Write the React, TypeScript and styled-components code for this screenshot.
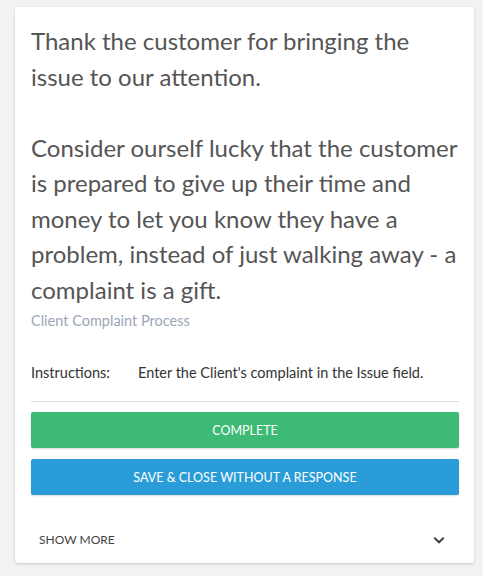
import React from 'react'
import styled, { createGlobalStyle } from 'styled-components'

const GlobalStyle = createGlobalStyle`
  html, body {
    margin: 0;
    padding: 0;
    background: #f3f3f3;
    font-family: Lato, 'Noto Sans', sans-serif;
  }
`

const Page = styled.div`
  padding: 7px 9px 12px 15px;
`

const Card = styled.section`
  background: #fff;
  border-radius: 3px;
  box-shadow: 0 1px 3px rgba(0, 0, 0, 0.18);
  padding: 16px 15px 16px 16px;
`

const Message = styled.p`
  margin: 0;
  font-size: 24px;
  line-height: 35.5px;
  color: #555;
  white-space: pre-line;
`

const Source = styled.div`
  font-size: 14.5px;
  color: #9aa6b6;
  margin-top: 5px;
  line-height: 18px;
`

const InfoRow = styled.div`
  display: grid;
  grid-template-columns: 107px 1fr;
  margin-top: 34px;
  font-size: 14.5px;
  line-height: 18px;
  color: #333;
  padding-bottom: 19px;
  border-bottom: 1px solid #ddd;
`

const Actions = styled.div`
  display: flex;
  flex-direction: column;
  gap: 11px;
  margin-top: 10px;
`

const ActionButton = styled.button<{ $tone: string }>`
  height: 36px;
  border: none;
  border-radius: 2px;
  background: ${({ $tone }) => $tone};
  color: #fff;
  font-family: inherit;
  font-size: 12.5px;
  text-transform: uppercase;
  box-shadow: 0 1px 2px rgba(0, 0, 0, 0.15);
  cursor: pointer;
`

const Toggle = styled.div`
  display: flex;
  justify-content: space-between;
  align-items: center;
  margin-top: 37px;
  padding: 0 13px 0 8px;
  font-size: 12px;
  color: #444;
  text-transform: uppercase;
`

const Chevron = () => (
  <svg width="14" height="14" viewBox="0 0 24 24" fill="none" stroke="#444" strokeWidth="3.5">
    <path d="M4 8l8 8 8-8" />
  </svg>
)

export default function App() {
  return (
    <Page>
      <GlobalStyle />
      <Card>
        <Message>
          {'Thank the customer for bringing the issue to our attention.\n\nConsider ourself lucky that the customer is prepared to give up their time and money to let you know they have a problem, instead of just walking away - a complaint is a gift.'}
        </Message>
        <Source>Client Complaint Process</Source>
        <InfoRow>
          <span>Instructions:</span>
          <span>Enter the Client's complaint in the Issue field.</span>
        </InfoRow>
        <Actions>
          <ActionButton $tone="#3dba73">Complete</ActionButton>
          <ActionButton $tone="#2a9dd8">Save &amp; Close without a response</ActionButton>
        </Actions>
        <Toggle>
          <span>Show more</span>
          <Chevron />
        </Toggle>
      </Card>
    </Page>
  )
}
